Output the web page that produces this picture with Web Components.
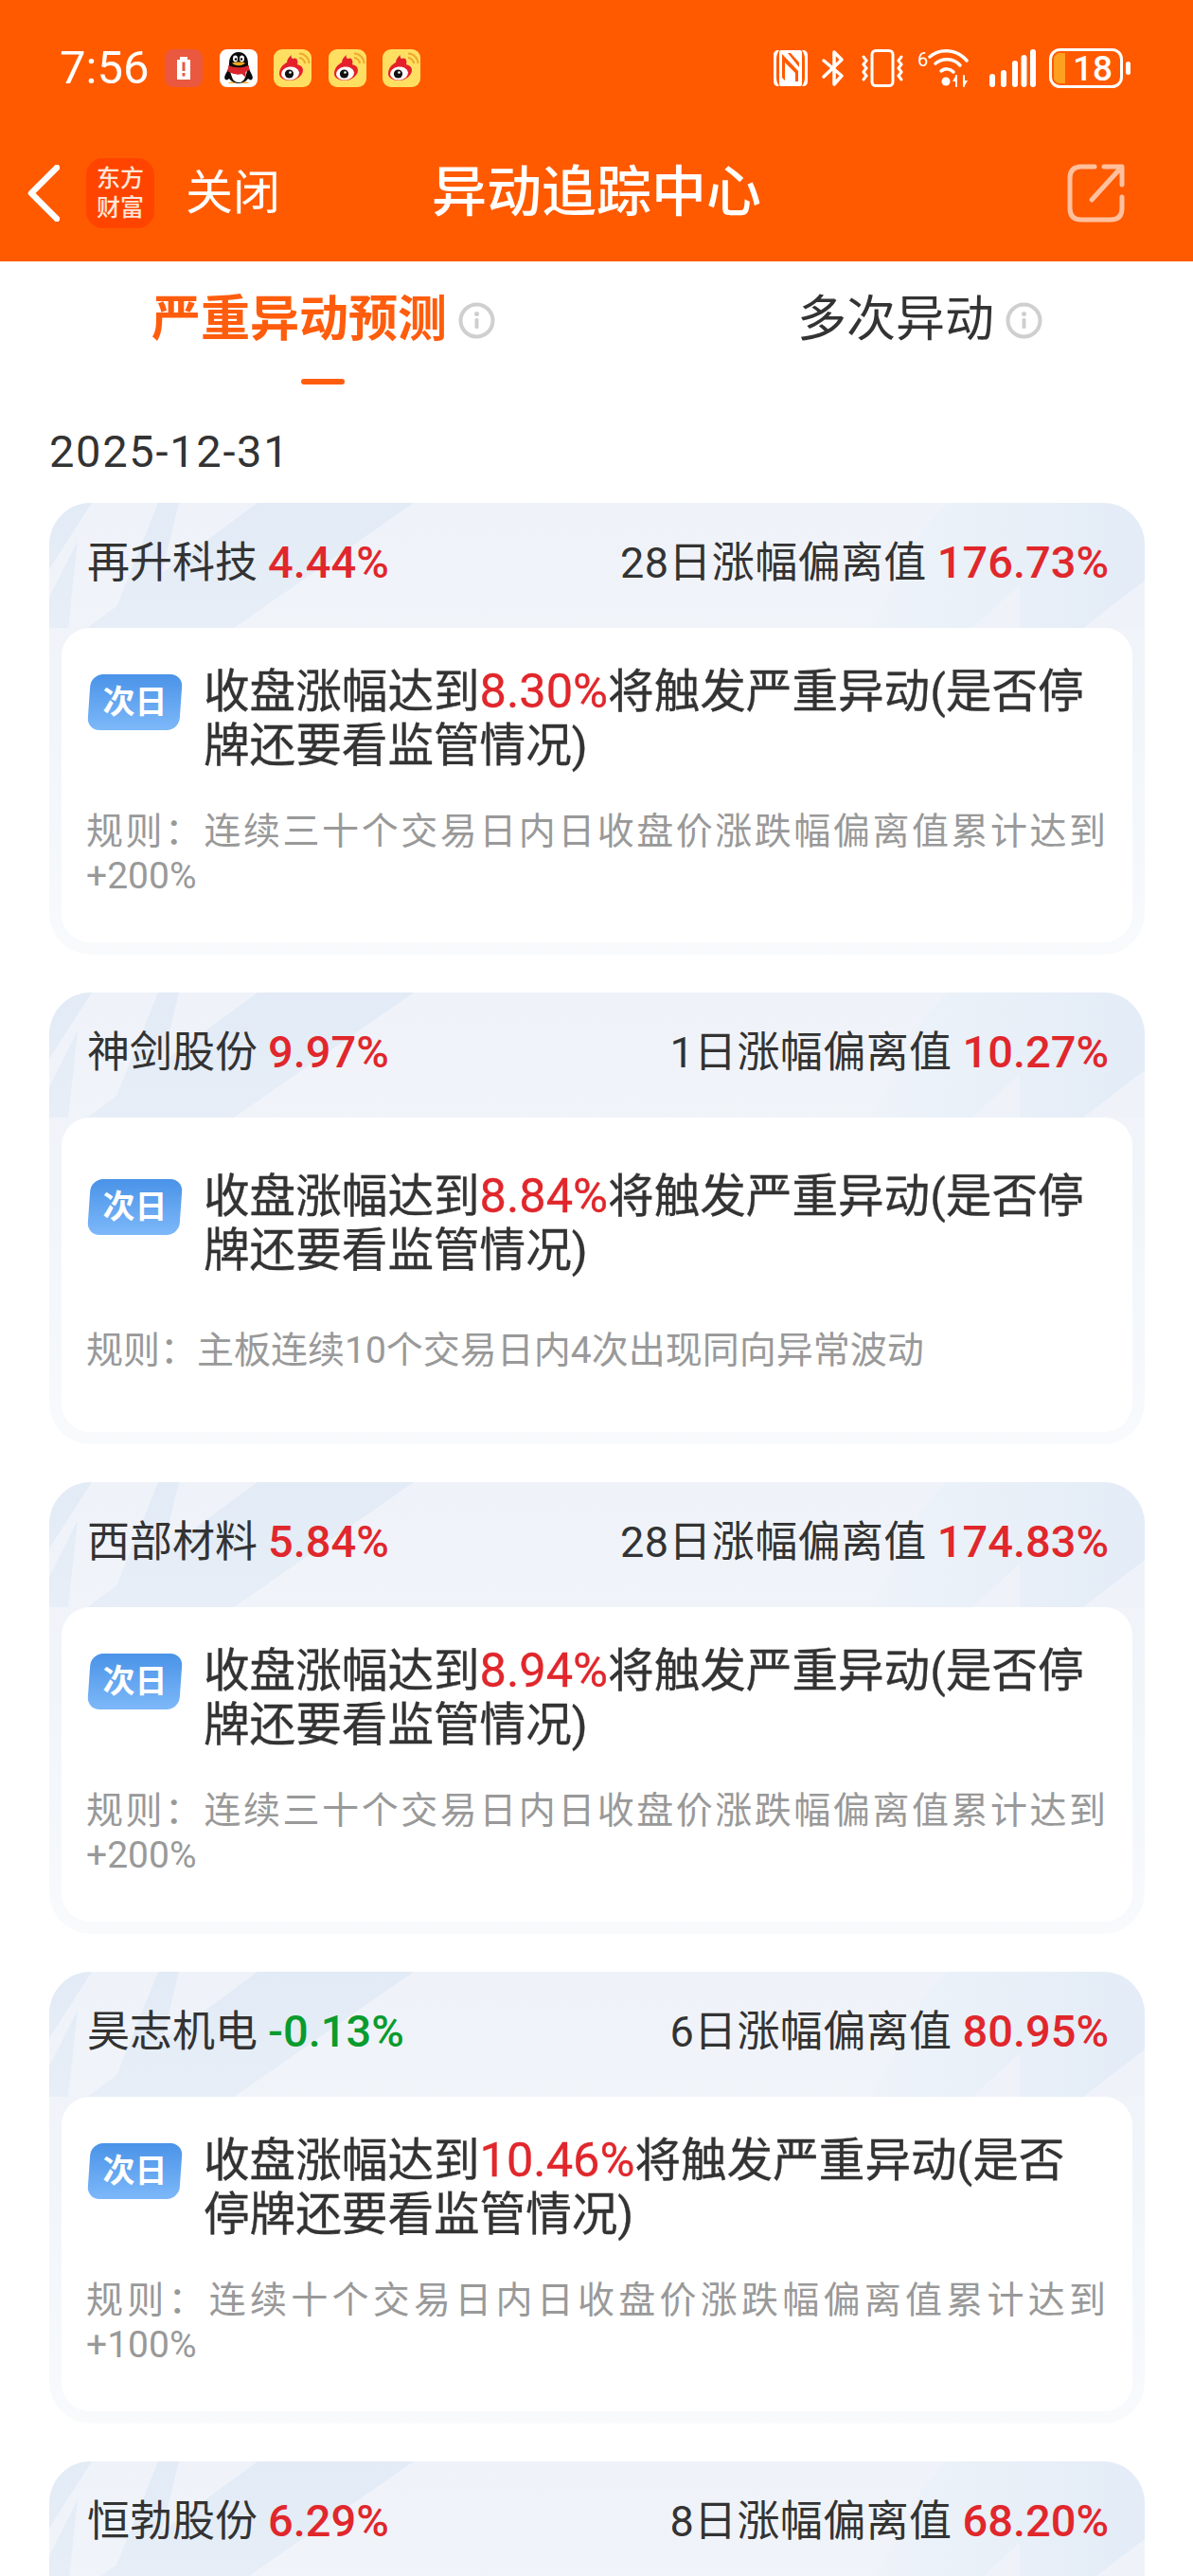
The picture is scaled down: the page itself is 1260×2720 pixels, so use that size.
<!DOCTYPE html>
<html lang="zh-CN">
<head>
<meta charset="utf-8">
<title>异动追踪中心</title>
<style>
   html, body { margin: 0; padding: 0; height: 2720px; overflow: hidden; background: #fff; }
   body { font-family: Roboto, "Noto Sans CJK SC", sans-serif; color: #333; }
   .hot { color: #e0272c; font-size: 50.500px; }
</style>
</head>
<body>
<top-bar></top-bar>
<tab-bar></tab-bar>
<date-line>2025-12-31</date-line>
<card-list>
   <stock-card name="再升科技" change="4.44%" label="28日涨幅偏离值" dev="176.73%">
      <span slot="title">收盘涨幅达到<span class="hot">8.30%</span>将触发严重异动(是否停牌还要看监管情况)</span>
      <span slot="rule">规则：连续三十个交易日内日收盘价涨跌幅偏离值累计达到+200%</span>
   </stock-card>
   <stock-card name="神剑股份" change="9.97%" label="1日涨幅偏离值" dev="10.27%">
      <span slot="title">收盘涨幅达到<span class="hot">8.84%</span>将触发严重异动(是否停牌还要看监管情况)</span>
      <span slot="rule">规则：主板连续10个交易日内4次出现同向异常波动</span>
   </stock-card>
   <stock-card name="西部材料" change="5.84%" label="28日涨幅偏离值" dev="174.83%">
      <span slot="title">收盘涨幅达到<span class="hot">8.94%</span>将触发严重异动(是否停牌还要看监管情况)</span>
      <span slot="rule">规则：连续三十个交易日内日收盘价涨跌幅偏离值累计达到+200%</span>
   </stock-card>
   <stock-card name="昊志机电" change="-0.13%" down label="6日涨幅偏离值" dev="80.95%">
      <span slot="title">收盘涨幅达到<span class="hot">10.46%</span>将触发严重异动(是否停牌还要看监管情况)</span>
      <span slot="rule">规则：连续十个交易日内日收盘价涨跌幅偏离值累计达到+100%</span>
   </stock-card>
   <stock-card name="恒勃股份" change="6.29%" label="8日涨幅偏离值" dev="68.20%"></stock-card>
</card-list>

<script>
const weibo = `
   <svg class="app" viewBox="0 0 40 40">
      <rect width="40" height="40" rx="9" fill="#ffdf62"/>
      <path d="M6 26c0-6 4-10 8-12 0-3 2-6 5-8-1 2 0 4 2 4 2-1 4 0 4 2 1 2 0 3 0 4 4 1 6 3 6 6 0 6-7 11-14 11-6 0-11-3-11-7z" fill="#e5202a"/>
      <ellipse cx="17.500" cy="25.500" rx="9.500" ry="7" fill="#fff" transform="rotate(-8 17.500 25.500)"/>
      <circle cx="16.500" cy="26" r="4.600" fill="#111"/>
      <circle cx="17.500" cy="24.500" r="1.300" fill="#fff"/>
      <path d="M27 9c3 0 6 3 6 6M27 4.500c6 0 10.500 5 10.500 10.500" fill="none" stroke="#f0a92c" stroke-width="2"/>
   </svg>`

class TopBar extends HTMLElement {
   constructor() {
      super();
      this.attachShadow({ mode: 'open' })
      this.shadowRoot.innerHTML = `
         <style>
            :host { display: block; height: 276px; background: #ff5a00; color: #fff; }
            .status { height: 132px; box-sizing: border-box; padding: 52px 66px 40px 63px; display: flex; align-items: center; }
            .time { font-size: 49px; width: 95px; margin-right: 16px; line-height: 42px; }
            .apps { display: flex; gap: 17.500px; }
            .app { width: 40px; height: 40px; display: block; }
            .sys { margin-left: auto; display: flex; align-items: center; }
            .sys svg { display: block; height: 40px; overflow: visible; }
            .nav { height: 144px; display: grid; grid-template-columns: 1fr auto 1fr; align-items: center; }
            .left { display: flex; align-items: center; padding-left: 29px; }
            .logo { width: 72px; height: 74px; margin-left: 28px; background: #ff4400; border-radius: 18px; color: #ffe6d8;
               font-size: 25px; line-height: 31px; text-align: center; display: flex; align-items: center; justify-content: center; font-weight: 500; }
            .close { font-size: 50px; margin-left: 33px; line-height: 60px; }
            .title { font-size: 58px; font-weight: 500; line-height: 70px; margin-top: -3px; }
            .right { display: flex; justify-content: flex-end; padding-right: 72px; }
         </style>
         <div class="status">
            <span class="time">7:56</span>
            <div class="apps">
               <svg class="app" viewBox="0 0 40 40">
                  <rect width="40" height="40" rx="9" fill="#e9583f"/>
                  <path d="M16 8h8v3h3v21H13V11h3z" fill="#fff"/>
                  <rect x="18.500" y="13.500" width="3" height="9.500" fill="#e9583f"/>
                  <rect x="18.500" y="25" width="3" height="3.500" fill="#e9583f"/>
               </svg>
               <svg class="app" viewBox="0 0 40 40">
                  <rect width="40" height="40" rx="8" fill="#fff"/>
                  <path d="M20 3c-7 0-10 6-10 12 0 3-1 5-2 8-2 4-4 7-2 9 1 1 3 0 4-1 2 3 6 5 10 5s8-2 10-5c1 1 3 2 4 1 2-2 0-5-2-9-1-3-2-5-2-8 0-6-3-12-10-12z" fill="#0b0b0b"/>
                  <path d="M11 23c2 7 3 12 9 12s7-5 9-12z" fill="#fff"/>
                  <path d="M9.500 17c6 3 15 3 21 0l1 5-4 2v6l-4-4c-3 1-7 1-10-.500l-5-2z" fill="#d8262c"/>
                  <ellipse cx="16.500" cy="10" rx="2.500" ry="3.400" fill="#fff"/>
                  <ellipse cx="23.500" cy="10" rx="2.500" ry="3.400" fill="#fff"/>
                  <circle cx="17" cy="10.500" r="1.200" fill="#000"/>
                  <circle cx="23" cy="10.500" r="1.200" fill="#000"/>
                  <path d="M13 14.500c4-1.500 10-1.500 14 0-3 3.500-11 3.500-14 0z" fill="#f3a91f"/>
                  <path d="M9 36c2-2 6-2 8 0zM23 36c2-2 6-2 8 0z" fill="#f3a91f"/>
               </svg>
               ${weibo}${weibo}${weibo}
            </div>
            <div class="sys">
               <svg width="36" viewBox="0 0 36 40" fill="#fff">
                  <path d="M5 1C2 1 0 3 0 6v28c0 3 2 5 5 5h1C4 36 3 33 3 30V10c0-3 1-6 3-9z"/>
                  <path d="M31 1c3 0 5 2 5 5v28c0 3-2 5-5 5h-1c2-3 3-6 3-9V10c0-3-1-6-3-9z"/>
                  <path d="M8 1h20c1 0 2 1 2 2v34c0 1-1 2-2 2H8c-1 0-2-1-2-2V3c0-1 1-2 2-2z"/>
                  <path d="M9 5l17 18v11h-3V25L12 14v19l-3-3zM15 4h3l9 10v5z" fill="#ff5a00"/>
               </svg>
               <svg width="25" viewBox="0 0 25 40" style="margin-left:15px" fill="none" stroke="#fff" stroke-width="3.500" stroke-linecap="round" stroke-linejoin="round">
                  <path d="M2 12l19 16-8 9V3l8 8L2 29"/>
               </svg>
               <svg width="48" viewBox="0 0 48 40" style="margin-left:15px" fill="none" stroke="#fff" stroke-width="3" stroke-linecap="round">
                  <rect x="13" y="1.500" width="22" height="37" rx="4"/>
                  <path d="M4 8l3 4-3 4 3 4-3 4 3 4-3 4M44 8l-3 4 3 4-3 4 3 4-3 4 3 4"/>
               </svg>
               <svg width="55" viewBox="0 0 55 40" style="margin-left:13px" fill="none" stroke="#fff" stroke-linecap="round">
                  <text x="0" y="18" fill="#fff" stroke="none" font-size="20" font-family="Roboto">6</text>
                  <path d="M13 8c10-9 28-9 39 4" stroke-width="3.500"/>
                  <path d="M19 15c7-6 19-6 26 2" stroke-width="3.500"/>
                  <path d="M25 23c4-3 9-3 13 1" stroke-width="3.500"/>
                  <circle cx="30" cy="34" r="4.500" fill="#fff" stroke="none"/>
                  <path d="M41 28v11M49 28v11" stroke-width="2"/>
                  <path d="M41 27l-4 7h4zM49 40l4-7h-4z" fill="#fff" stroke="none"/>
               </svg>
               <svg width="49" viewBox="0 0 49 40" style="margin-left:21px" fill="none" stroke="#fff" stroke-width="6" stroke-linecap="round">
                  <path d="M3 29v8M15 25v12M27 15v22M46 3v34M36.500 9v28" />
               </svg>
               <svg width="86" viewBox="0 0 86 42" style="margin-left:14px;height:42px">
                  <rect x="1.500" y="1.500" width="75" height="39" rx="10" fill="none" stroke="#fff" stroke-width="3"/>
                  <path d="M5 11c0-3 3-6 6-6h6v32h-6c-3 0-6-3-6-6z" fill="#ffa01e"/>
                  <text x="46" y="34" text-anchor="middle" fill="#fff" font-size="37" font-weight="500" font-family="Roboto">18</text>
                  <rect x="81" y="14" width="5" height="14" rx="2.500" fill="#fff"/>
               </svg>
            </div>
         </div>
         <div class="nav">
            <div class="left">
               <svg width="34" height="60" viewBox="0 0 34 60" fill="none" stroke="#fff" stroke-width="6.500" stroke-linecap="round" stroke-linejoin="round">
                  <path d="M31 3L4 30l27 27"/>
               </svg>
               <div class="logo"><span>东方<br>财富</span></div>
               <span class="close">关闭</span>
            </div>
            <span class="title">异动追踪中心</span>
            <div class="right">
               <svg width="61" height="62" viewBox="0 0 61 62" fill="none" stroke="#fff" stroke-opacity=".62" stroke-width="5" stroke-linecap="round" stroke-linejoin="round">
                  <path d="M29 3H15C7 3 3 7 3 15v32c0 8 4 12 12 12h31c8 0 12-4 12-12V35"/>
                  <path d="M26 38L57 4M39 3h19v19"/>
               </svg>
            </div>
         </div>
      `;
   }
}
customElements.define('top-bar', TopBar)

class InfoIcon extends HTMLElement {
   constructor() {
      super();
      this.attachShadow({ mode: 'open' })
      this.shadowRoot.innerHTML = `
         <style>
            :host { display: block; width: 39px; height: 39px; }
            svg { display: block; }
         </style>
         <svg width="39" height="39" viewBox="0 0 39 39">
            <circle cx="19.500" cy="19.500" r="17" fill="none" stroke="#cfcfcf" stroke-width="4"/>
            <circle cx="19.500" cy="12.500" r="2.500" fill="#cfcfcf"/>
            <rect x="17.500" y="17" width="4" height="11" rx="1.500" fill="#cfcfcf"/>
         </svg>
      `;
   }
}
customElements.define('info-icon', InfoIcon)

class TabBar extends HTMLElement {
   constructor() {
      super();
      this.attachShadow({ mode: 'open' })
      this.shadowRoot.innerHTML = `
         <style>
            :host { display: flex; height: 136px; padding-left: 160px; gap: 319px; }
            .tab { display: flex; align-items: center; gap: 12px; height: 124px; font-size: 52px; position: relative; white-space: nowrap; line-height: 70px; }
            .active { color: #ff5d0d; font-weight: 700; }
            .active::after { content: ''; position: absolute; left: 158px; top: 124px; width: 46px; height: 6px; border-radius: 3px; background: #ff5d0d; }
         </style>
         <div class="tab active">严重异动预测<info-icon></info-icon></div>
         <div class="tab">多次异动<info-icon></info-icon></div>
      `;
   }
}
customElements.define('tab-bar', TabBar)

class DateLine extends HTMLElement {
   constructor() {
      super();
      this.attachShadow({ mode: 'open' })
      this.shadowRoot.innerHTML = `
         <style>
            :host { display: block; height: 119px; box-sizing: border-box; padding: 35px 0 0 52px; font-size: 47px; line-height: 60px; letter-spacing: 1.700px; color: #333; }
         </style>
         <slot></slot>
      `;
   }
}
customElements.define('date-line', DateLine)

class CardList extends HTMLElement {
   constructor() {
      super();
      this.attachShadow({ mode: 'open' })
      this.shadowRoot.innerHTML = `
         <style>
            :host { display: flex; flex-direction: column; gap: 40px; padding: 0 51px 0 52px; height: 2189px; overflow: hidden; }
         </style>
         <slot></slot>
      `;
   }
}
customElements.define('card-list', CardList)

class StockCard extends HTMLElement {
   constructor() {
      super();
      this.attachShadow({ mode: 'open' })
   }
   connectedCallback() {
      const changeColor = this.hasAttribute('down') ? '#0a9b2e' : '#e0272c'
      this.shadowRoot.innerHTML = `
         <style>
            :host { display: block; position: relative; height: 477px; flex: none; border-radius: 44px; overflow: hidden;
               background: linear-gradient(#eff3f9 0, #f1f5fa 45%, #f8fafc 100%); }
            .shards { position: absolute; left: 0; top: 0; width: 100%; height: 132px; }
            .head { position: relative; height: 132px; box-sizing: border-box; padding: 0 38px 6px 40px; display: flex; align-items: center; justify-content: space-between; font-size: 45px; line-height: 60px; white-space: nowrap; color: #333; }
            .label { letter-spacing: .4px; }
            .val { font-size: 47px; font-weight: 500; margin-left: 11px; letter-spacing: 0; }
            .body { position: relative; box-sizing: border-box; margin: 0 13px; height: 332px; background: #fff; border-radius: 30px;
               padding: 0 28px 8px 26px; display: flex; flex-direction: column; justify-content: space-evenly; }
            .main { display: flex; gap: 24px; }
            .badge { flex: none; box-sizing: border-box; width: 97px; height: 59px; margin: 11px 0 0 3px; border-radius: 13px; transform: skewX(-4deg);
               background: linear-gradient(#4a93e8, #7db8f9); color: #fff; font-size: 34px; font-weight: 700; line-height: 59px; text-align: center; }
            .badge span { display: block; transform: skewX(4deg); }
            .title { font-size: 48.600px; line-height: 57px; color: #333; -webkit-text-stroke: .35px; }
            .rule { font-size: 39px; line-height: 47px; color: #999; text-align: justify; }
         </style>
         <svg class="shards" viewBox="0 0 1157 132" preserveAspectRatio="none">
            <defs>
               <linearGradient id="fade" x1="0" y1="0" x2="0" y2="1">
                  <stop offset="0" stop-color="#e2ebf6"/>
                  <stop offset="1" stop-color="#e7eef7"/>
               </linearGradient>
               <linearGradient id="side" x1="0" y1="0" x2="1" y2="0">
                  <stop offset="0" stop-color="#eef3f9"/>
                  <stop offset="1" stop-color="#e3ecf7"/>
               </linearGradient>
            </defs>
            <path d="M0 0H45L0 70zM115 0h22L105 132H62zM220 0h165L195 132H40zM0 100L30 40 20 132H0z" fill="url(#fade)"/>
            <path d="M921 30L948 0h209v132H868z" fill="url(#side)"/>
            <path d="M1025 86v46h-50zM1157 82v50h-65z" fill="#eff3f9"/>
         </svg>
         <div class="head">
            <div>${this.getAttribute('name')}<span class="val" style="color:${changeColor}">${this.getAttribute('change')}</span></div>
            <div class="label">${this.getAttribute('label')}<span class="val" style="color:#e0272c">${this.getAttribute('dev')}</span></div>
         </div>
         <div class="body">
            <div class="main">
               <div class="badge"><span>次日</span></div>
               <div class="title"><slot name="title"></slot></div>
            </div>
            <div class="rule"><slot name="rule"></slot></div>
         </div>
      `;
   }
}
customElements.define('stock-card', StockCard)
</script>
</body>
</html>
